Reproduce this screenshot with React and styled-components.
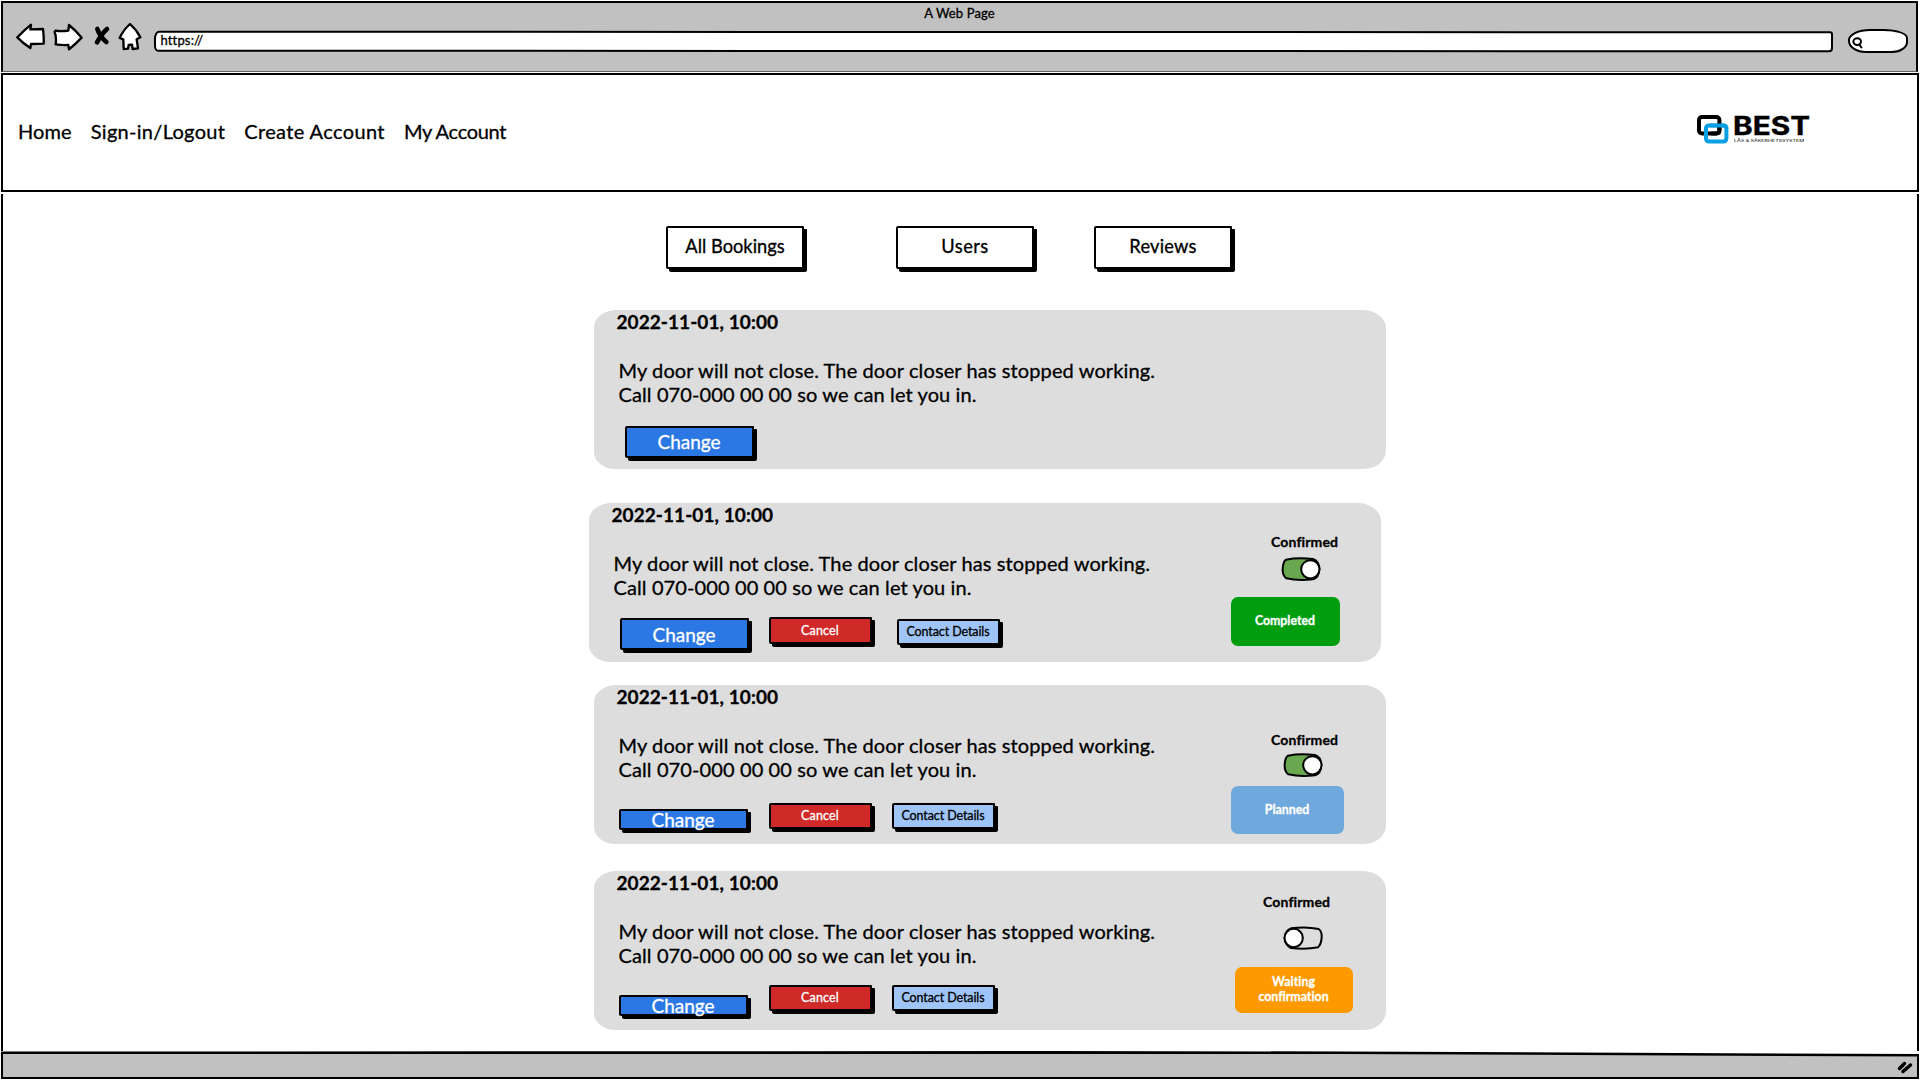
import React from 'react';
import styled, { createGlobalStyle, css } from 'styled-components';

const GlobalStyle = createGlobalStyle`
  * { box-sizing: border-box; }
  body { margin: 0; background: #fff; }
`;

const ink = '#000';

const Page = styled.div`
  width: 1920px;
  height: 1080px;
  padding: 1px 1px 0;
  display: flex;
  flex-direction: column;
  overflow: hidden;
  background: #fff;
  color: ${ink};
  font-family: Lato, "Open Sans", sans-serif;
  font-size: 20px;
  -webkit-text-stroke: 0.3px currentColor;
  white-space: nowrap;
`;

/* ---------- browser chrome ---------- */

const Chrome = styled.header`
  height: 71px;
  margin-right: 1px;
  flex: none;
  background: #c1c1c1;
  border: 2px solid ${ink};
  border-bottom: 1px solid #666;
  display: flex;
  flex-direction: column;
`;

const PageTitle = styled.div`
  height: 20px;
  font-size: 13px;
  letter-spacing: 0.12px;
  line-height: 21px;
  text-align: center;
`;

const Controls = styled.div`
  display: flex;
  align-items: flex-start;
  padding: 0 8.5px 0 13px;
`;

const ToolIcon = styled.svg`
  display: block;
  flex: none;
  width: ${(p) => p.$w}px;
  height: 28px;
  margin-right: ${(p) => p.$gap}px;
  fill: #fff;
  stroke: ${ink};
  stroke-width: ${(p) => p.$stroke || 7};
  stroke-linejoin: round;
  stroke-linecap: round;
`;

const UrlBar = styled.div`
  flex: 1;
  height: 21px;
  margin: 8px 15.5px 0 0;
  padding-left: 4.5px;
  background: #fff;
  border: 2px solid ${ink};
  border-radius: 5px 3px 4px 4px / 8px 3px 4px 6px;
  transform: rotate(0.02deg);
  font-size: 13px;
  letter-spacing: 0.15px;
  line-height: 15px;
`;

const SearchBox = styled.div`
  width: 60px;
  height: 24px;
  margin-top: 6px;
  padding: 6px 0 0 2px;
  background: #fff;
  border: 2px solid ${ink};
  border-radius: 22px 24px 16px 18px / 11px 9px 11px 12px;
`;

const SearchIcon = styled.svg`
  display: block;
  width: 11px;
  height: 12px;
  fill: none;
  stroke: ${ink};
  stroke-width: 2;
  stroke-linecap: round;
`;

/* ---------- site header ---------- */

const SiteHeader = styled.div`
  height: 119px;
  margin-top: 1px;
  flex: none;
  border: 2px solid ${ink};
  border-bottom-width: 2.5px;
  display: flex;
  align-items: center;
  justify-content: space-between;
  padding: 0 105.5px 0 15px;
`;

const Nav = styled.nav`
  display: flex;
  gap: 19px;
`;

const NavLink = styled.a`
  letter-spacing: ${(p) => p.$tracking}px;
  line-height: 24px;
  margin-top: -4px;
`;

const LogoMark = styled.svg`
  display: block;
  width: 116px;
  height: 34px;
  margin-top: -9px;
  overflow: visible;
  -webkit-text-stroke: 0;
`;

/* ---------- content ---------- */

const Content = styled.main`
  flex: 1;
  margin-top: 2px;
  border: solid ${ink};
  border-width: 0 2px;
  padding-top: 32px;
`;

const Tabs = styled.div`
  display: flex;
  padding-left: 663px;
`;

const SketchButton = styled.button`
  flex: none;
  width: ${(p) => p.$w}px;
  height: ${(p) => p.$h}px;
  margin: ${(p) => p.$drop || 0}px 0 0 ${(p) => p.$gap || 0}px;
  padding: 0 0 2px;
  display: flex;
  align-items: center;
  justify-content: center;
  border: 2px solid ${ink};
  border-bottom-width: 2.5px;
  border-radius: 2px 1px 2px 2px;
  box-shadow: 3px 3px 0 ${ink};
  color: ${ink};
  background: #fff;
  font-family: inherit;
  font-size: 18.3px;
  line-height: 1;
  letter-spacing: ${(p) => p.$tracking || 0}px;
  white-space: nowrap;
  -webkit-text-stroke: inherit;
  ${(p) => p.$kind === 'change' && css`
    padding-bottom: 0;
    background: #2b78e4;
    color: #fff;
    font-size: 19px;
    -webkit-text-stroke: 0.3px #fff;
  `}
  ${(p) => p.$kind === 'cancel' && css`
    padding: 1px 0 0;
    background: #cf2a27;
    color: #fff;
    font-size: 12.5px;
    letter-spacing: 0.15px;
    -webkit-text-stroke: 0.3px #fff;
  `}
  ${(p) => p.$kind === 'contact' && css`
    padding: 1px 0 0;
    background: #9fc5f8;
    font-size: 12.5px;
    letter-spacing: -0.1px;
  `}
`;

const Card = styled.article`
  width: 792.5px;
  height: 159.2px;
  margin: ${(p) => p.$gap}px 0 0 ${(p) => (p.$shifted ? 585.5 : 590.5)}px;
  padding-right: ${(p) => (p.$shifted ? 20.5 : 25.5)}px;
  display: flex;
  justify-content: space-between;
  background: #ddd;
  border-radius: 23px 24px 22px 21px / 17px 18px 19px 17px;
`;

const Details = styled.div`
  padding-left: 23px;
`;

const DateLine = styled.h2`
  margin: 0;
  font-size: 19px;
  font-weight: 700;
  line-height: 24px;
  letter-spacing: 0.07px;
`;

const Message = styled.p`
  margin: 24px 0 1px 2px;
  line-height: 24px;
  letter-spacing: 0.11px;
`;

const Actions = styled.div`
  display: flex;
  align-items: flex-start;
  padding-left: ${(p) => p.$inset}px;
`;

const Status = styled.div`
  width: 130px;
  padding-top: ${(p) => p.$top}px;
  display: flex;
  flex-direction: column;
  align-items: flex-start;
`;

const Confirmed = styled.div`
  margin-left: ${(p) => p.$inset}px;
  font-size: 14px;
  font-weight: 700;
  line-height: 18px;
  letter-spacing: 0.15px;
`;

const ToggleSvg = styled.svg`
  display: block;
  width: 40px;
  height: 24px;
  margin: ${(p) => p.$gap}px 0 0 ${(p) => p.$inset}px;
  stroke: ${ink};
  stroke-width: 6;
`;

const Badge = styled.div`
  width: ${(p) => p.$w}px;
  height: ${(p) => p.$h}px;
  margin: ${(p) => p.$gap}px 0 0 ${(p) => p.$inset || 0}px;
  padding-bottom: 2px;
  display: flex;
  align-items: center;
  justify-content: center;
  border-radius: 7px;
  background: ${(p) => p.$color};
  color: #fff;
  font-size: 12.3px;
  font-weight: 700;
  line-height: 15px;
  letter-spacing: 0.02px;
  text-align: center;
  white-space: pre-line;
`;

const Footer = styled.footer`
  height: 29px;
  flex: none;
  padding: 2.5px 2px 2.5px;
  background: ${ink};
  clip-path: polygon(0 0.5px, 55% 0, 70% 0.5px, 100% 3px, 100% 28px, 0 28px);
`;

const FooterFill = styled.div`
  height: 23.5px;
  display: flex;
  justify-content: flex-end;
  background: #c1c1c1;
  clip-path: polygon(0 0.5px, 55% 0, 70% 0.5px, 100% 3px, 100% 100%, 0 100%);
`;

const Grip = styled.svg`
  display: block;
  width: 20px;
  height: 24px;
  stroke: ${ink};
  stroke-width: 3.5;
  stroke-linecap: round;
`;

const Logo = () => (
  <LogoMark viewBox="0 0 116 34">
    <rect x="3" y="6" width="20.4" height="16.4" rx="3" fill="none" stroke="#000" strokeWidth="4" />
    <rect x="10" y="14.4" width="20.4" height="16.2" rx="3" fill="none" stroke="#089fe3" strokeWidth="4" />
    <path d="M23.4 12 V19.2 Q23.4 22.4 20 22.4 H15" fill="none" stroke="#000" strokeWidth="4" />
    <path d="M14 14.4 H27 Q30.4 14.4 30.4 17.4" fill="none" stroke="#089fe3" strokeWidth="4" />
    <text x="37" y="23.6" fontFamily="Inter, sans-serif" fontWeight="700" fontSize="25.5" textLength="77" lengthAdjust="spacingAndGlyphs" stroke="#000" strokeWidth="0.4">BEST</text>
    <text x="38" y="30.7" fontFamily="Inter, sans-serif" fontSize="4" textLength="70" lengthAdjust="spacingAndGlyphs">LÅS &amp; SÄKERHETSSYSTEM</text>
  </LogoMark>
);

const Toggle = ({ on, ...rest }) => (
  <ToggleSvg viewBox="0 0 120 72" {...rest}>
    {on ? (
      <>
        <path d="M15 8 Q50 1 96 6 Q114 12 115 36 Q114 62 96 67 Q50 72 16 64 Q4 55 5 36 Q6 14 15 8Z" fill="#6aa84f" />
        <circle cx="88" cy="37" r="27.5" fill="#fff" />
      </>
    ) : (
      <>
        <path d="M24 7 Q70 1 107 9 Q117 16 116 34 Q115 54 105 64 Q70 71 24 66 Q5 56 5 36 Q6 14 24 7Z" fill="#ddd" />
        <circle cx="32" cy="36" r="27.5" fill="#fff" />
      </>
    )}
  </ToggleSvg>
);

const bookings = [
  { gap: 41, inset: 6.5, change: { drop: 19, h: 32 } },
  {
    gap: 34, shifted: true, inset: 6.5,
    change: { drop: 18.5, h: 32 },
    cancel: { drop: 17.5, gap: 20 }, contact: { drop: 19, gap: 25 },
    status: { top: 30, inset: 40.5, on: true, toggleGap: 6.2, toggleInset: 50.7, label: 'Completed', color: '#009e0f', w: 109, h: 49, badgeGap: 16.3 },
  },
  {
    gap: 22.8, inset: 0.5,
    change: { drop: 27, h: 21.5 },
    cancel: { drop: 21, gap: 21 }, contact: { drop: 21, gap: 20 },
    status: { top: 46, inset: 40.5, on: true, toggleGap: 4.2, toggleInset: 52.7, label: 'Planned', color: '#6fa8dc', w: 113, h: 48, badgeGap: 9.3 },
  },
  {
    gap: 26.8, inset: 0.5,
    change: { drop: 27, h: 21.5 },
    cancel: { drop: 16.9, gap: 21 }, contact: { drop: 16.9, gap: 20 },
    status: { top: 22.3, inset: 32.5, on: false, toggleGap: 15, toggleInset: 52.3, label: 'Waiting\nconfirmation', color: '#ff9900', w: 118, h: 46, badgeGap: 17, badgeInset: 4 },
  },
];

const Booking = ({ gap, shifted, inset, change, cancel, contact, status }) => (
  <Card $gap={gap} $shifted={shifted}>
    <Details>
      <DateLine>2022-11-01, 10:00</DateLine>
      <Message>
        My door will not close. The door closer has stopped working.
        <br />
        Call 070-000 00 00 so we can let you in.
      </Message>
      <Actions $inset={inset + 1.5}>
        <SketchButton $kind="change" $w={129} $h={change.h} $drop={change.drop}>Change</SketchButton>
        {cancel && (
          <SketchButton $kind="cancel" $w={103} $h={26.5} $gap={cancel.gap} $drop={cancel.drop}>Cancel</SketchButton>
        )}
        {contact && (
          <SketchButton $kind="contact" $w={103} $h={26.5} $gap={contact.gap} $drop={contact.drop}>Contact Details</SketchButton>
        )}
      </Actions>
    </Details>
    {status && (
      <Status $top={status.top}>
        <Confirmed $inset={status.inset}>Confirmed</Confirmed>
        <Toggle on={status.on} $gap={status.toggleGap} $inset={status.toggleInset} />
        <Badge $w={status.w} $h={status.h} $gap={status.badgeGap} $inset={status.badgeInset} $color={status.color}>
          {status.label}
        </Badge>
      </Status>
    )}
  </Card>
);

export default function App() {
  return (
    <Page>
      <GlobalStyle />
      <Chrome>
        <PageTitle>A Web Page</PageTitle>
        <Controls>
          <ToolIcon $w={29} $gap={8} viewBox="45 27 87 84">
            <path d="M49 70 Q70 48 90 32 L88 46 L126 45 Q129 68 128 89 L90 90 L88 102 Q66 88 49 70Z" />
          </ToolIcon>
          <ToolIcon $w={30} $gap={10} viewBox="156 27 90 84">
            <path d="M163 50 Q180 53 202 50 L204 33 Q225 50 242 71 Q224 90 204 106 L202 93 Q182 94 164 91 Q167 70 161 54Z" />
          </ToolIcon>
          <ToolIcon $w={18} $gap={7} $stroke={14} viewBox="279 27 54 84">
            <path d="M321 45 Q306 58 291 85" fill="none" />
            <path d="M292 45 Q300 68 319 84" fill="none" />
          </ToolIcon>
          <ToolIcon $w={24} $gap={11.5} viewBox="354 27 72 84">
            <path d="M390 30 Q410 48 421 70 L410 76 L414 103 L398 105 L396 92 L386 93 L384 104 L371 105 L370 76 L359 72 Q370 48 390 30Z" />
          </ToolIcon>
          <UrlBar>https://</UrlBar>
          <SearchBox>
            <SearchIcon viewBox="0 0 11 12">
              <ellipse cx="5.2" cy="4.6" rx="3.8" ry="3.4" />
              <path d="M7.3 7.6 L9.4 10.4" />
            </SearchIcon>
          </SearchBox>
        </Controls>
      </Chrome>

      <SiteHeader>
        <Nav>
          <NavLink $tracking={0.1}>Home</NavLink>
          <NavLink $tracking={0.3}>Sign-in/Logout</NavLink>
          <NavLink $tracking={0.38}>Create Account</NavLink>
          <NavLink $tracking={-0.3}>My Account</NavLink>
        </Nav>
        <Logo />
      </SiteHeader>

      <Content>
        <Tabs>
          <SketchButton $w={138} $h={42.5}>All Bookings</SketchButton>
          <SketchButton $w={138} $h={42.5} $gap={92} $tracking={0.45}>Users</SketchButton>
          <SketchButton $w={138} $h={42.5} $gap={60} $tracking={0.2}>Reviews</SketchButton>
        </Tabs>
        {bookings.map((b, i) => (
          <Booking key={i} {...b} />
        ))}
      </Content>

      <Footer>
        <FooterFill>
          <Grip viewBox="0 0 20 24">
            <path d="M2.5 14.5 L7.5 9.5" />
            <path d="M6 17.5 L13.5 11" />
          </Grip>
        </FooterFill>
      </Footer>
    </Page>
  );
}
